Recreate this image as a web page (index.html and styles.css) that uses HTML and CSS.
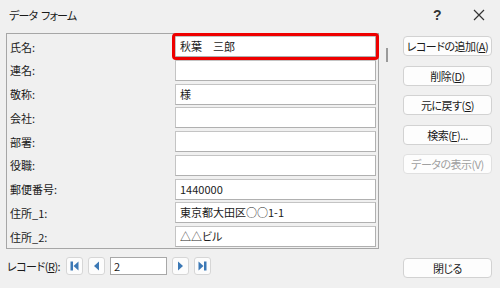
FILE: index.html
```html
<!DOCTYPE html>
<html lang="ja">
<head>
<meta charset="UTF-8">
<meta name="viewport" content="width=device-width, initial-scale=1.0">
<title>データ フォーム</title>
<link rel="stylesheet" href="styles.css">
</head>
<body>
  <div class="dialog">
    <div class="titlebar">
      <span class="title">データ フォーム</span>
      <span class="help">?</span>
      <span class="close-x">
        <svg width="12" height="12" viewBox="0 0 12 12"><path d="M1 1 L11 11 M11 1 L1 11" stroke="#333" stroke-width="1.2" fill="none"/></svg>
      </span>
    </div>
    <div class="main">
      <div class="fields">
        <div class="row"><span class="label">氏名:</span><div class="field active">秋葉　三郎</div></div>
        <div class="row"><span class="label">連名:</span><div class="field"></div></div>
        <div class="row"><span class="label">敬称:</span><div class="field">様</div></div>
        <div class="row"><span class="label">会社:</span><div class="field"></div></div>
        <div class="row"><span class="label">部署:</span><div class="field"></div></div>
        <div class="row"><span class="label">役職:</span><div class="field"></div></div>
        <div class="row"><span class="label">郵便番号:</span><div class="field">1440000</div></div>
        <div class="row"><span class="label">住所_1:</span><div class="field">東京都大田区○○1-1</div></div>
        <div class="row"><span class="label">住所_2:</span><div class="field">△△ビル</div></div>
      </div>
      <div class="scroll"><div class="thumb"></div></div>
      <div class="actions">
        <button class="btn">レコードの追加(<u>A</u>)</button>
        <button class="btn">削除(<u>D</u>)</button>
        <button class="btn">元に戻す(<u>S</u>)</button>
        <button class="btn">検索(<u>F</u>)...</button>
        <button class="btn disabled">データの表示(V)</button>
      </div>
    </div>
    <div class="footer">
      <span class="rec-label">レコード(<u>R</u>):</span>
      <div class="nav">
        <span class="nav-btn">
          <svg width="17" height="18" viewBox="0 0 17 18"><rect x="4.5" y="4.5" width="2.5" height="9" fill="#3b78b5"/><polygon points="12.5,4.5 7.5,9 12.5,13.5" fill="#3b78b5"/></svg>
        </span>
        <span class="nav-btn">
          <svg width="17" height="18" viewBox="0 0 17 18"><polygon points="11,4.5 6,9 11,13.5" fill="#3b78b5"/></svg>
        </span>
        <div class="rec-input">2</div>
        <span class="nav-btn">
          <svg width="17" height="18" viewBox="0 0 17 18"><polygon points="6,4.5 11,9 6,13.5" fill="#3b78b5"/></svg>
        </span>
        <span class="nav-btn">
          <svg width="17" height="18" viewBox="0 0 17 18"><polygon points="4.5,4.5 9.5,9 4.5,13.5" fill="#3b78b5"/><rect x="10" y="4.5" width="2.5" height="9" fill="#3b78b5"/></svg>
        </span>
      </div>
      <button class="btn close-btn">閉じる</button>
    </div>
  </div>
</body>
</html>
```

FILE: styles.css
```css
body {
  margin: 0;
  background-color: #f0f0f0;
  font-family: "Noto Sans CJK JP", "Noto Sans", sans-serif;
  font-size: 11px;
  font-feature-settings: "palt";
  color: #1a1a1a;
}

.dialog {
  width: 500px;
  height: 288px;
  overflow: hidden;
  white-space: nowrap;
}

.titlebar {
  height: 33px;
  display: flex;
  align-items: center;
  padding-left: 9px;
  padding-bottom: 4px;
  box-sizing: border-box;
}

.title {
  flex: 1;
  line-height: 16px;
  letter-spacing: -0.8px;
  word-spacing: 2px;
}

.help {
  width: 12px;
  margin-right: 28px;
  font-size: 14px;
  font-weight: bold;
  color: #333;
  font-family: "Liberation Sans", sans-serif;
}

.close-x {
  width: 12px;
  height: 12px;
  margin-right: 15px;
  display: flex;
}

.main {
  display: flex;
  padding-left: 6px;
}

.fields {
  width: 373px;
  height: 216px;
  box-sizing: border-box;
  border: 1px solid #a6a6a6;
  padding: 2px 2px 0 3px;
  display: flex;
  flex-direction: column;
  gap: 2.75px;
}

.row {
  display: flex;
  align-items: center;
  height: 21px;
}

.label {
  width: 165px;
  line-height: 16px;
}

.field {
  width: 201px;
  height: 21px;
  box-sizing: border-box;
  background-color: #ffffff;
  border: 1px solid #c4c4c4;
  border-right-color: #b0b0b0;
  border-bottom-color: #b0b0b0;
  padding-left: 4px;
  line-height: 19px;
}

.field.active {
  outline: 3px solid #ee0000;
  outline-offset: 0;
  border-radius: 1px;
}

.scroll {
  width: 24px;
}

.thumb {
  width: 2px;
  height: 14px;
  margin: 15px 0 0 7px;
  background-color: #9a9a9a;
}

.actions {
  width: 89px;
  padding-top: 3px;
  display: flex;
  flex-direction: column;
  gap: 9.5px;
}

.btn {
  width: 89px;
  height: 20px;
  padding: 0;
  background-color: #fdfdfd;
  border: 1px solid #d2d2d2;
  border-radius: 4px;
  font-family: inherit;
  font-size: 11px;
  font-feature-settings: "palt";
  letter-spacing: -0.5px;
  line-height: 16px;
  white-space: nowrap;
  color: #1a1a1a;
}

.btn.disabled {
  color: #a0a0a0;
  border-color: #e0e0e0;
}

.footer {
  display: flex;
  align-items: flex-start;
  padding: 8px 0 0 7px;
}

.rec-label {
  width: 59px;
  line-height: 18px;
  letter-spacing: -0.5px;
}

.nav {
  display: flex;
  gap: 5px;
  flex: 1;
}

.nav-btn {
  width: 17px;
  height: 18px;
  box-sizing: border-box;
  background-color: #fcfcfc;
  border: 1px solid #d6d6d6;
  border-radius: 3px;
  display: flex;
  align-items: center;
  justify-content: center;
}

.nav-btn svg {
  flex: none;
}

.rec-input {
  width: 57px;
  height: 18px;
  box-sizing: border-box;
  background-color: #ffffff;
  border: 1px solid #a8a8a8;
  padding-left: 3px;
  line-height: 16px;
}

.close-btn {
  margin: 1px 8px 0 0;
}
```
